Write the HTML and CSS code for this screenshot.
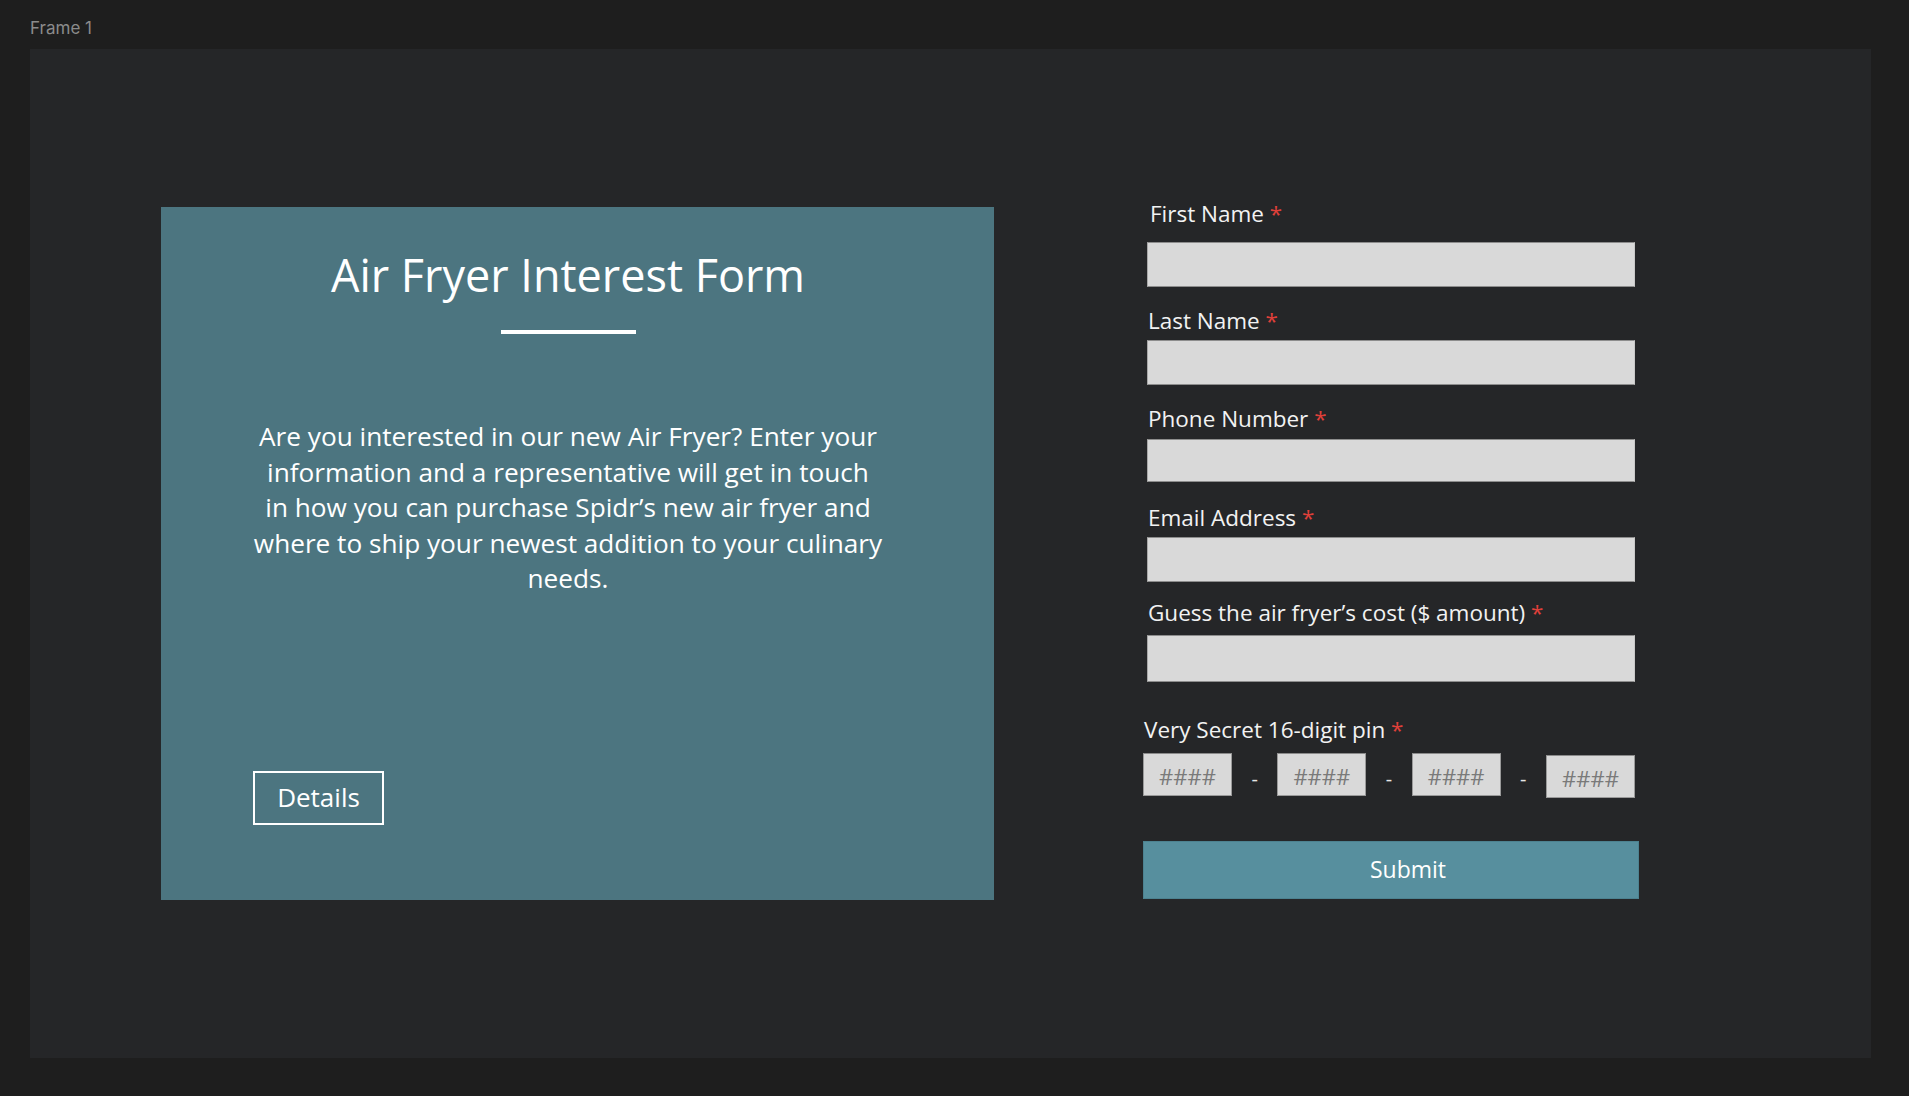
FILE: index.html
```html
<!DOCTYPE html>
<html lang="en">
<head>
<meta charset="utf-8">
<title>Air Fryer Interest Form</title>
<link rel="stylesheet" href="styles.css">
</head>
<body>
  <div class="frame-label">Frame 1</div>
  <div class="frame">
    <section class="card">
      <div class="card-inner">
        <h1 class="card-title">Air Fryer Interest Form</h1>
        <div class="card-rule"></div>
        <p class="card-text">Are you interested in our new Air Fryer? Enter your<br>information and a representative will get in touch<br>in how you can purchase Spidr’s new air fryer and<br>where to ship your newest addition to your culinary<br>needs.</p>
      </div>
      <button class="details-btn" type="button">Details</button>
    </section>

    <form class="form">
      <label class="field-label lbl-first">First Name <span class="req">*</span></label>
      <div class="field-input in-first"></div>

      <label class="field-label lbl-next">Last Name <span class="req">*</span></label>
      <div class="field-input"></div>

      <label class="field-label lbl-next">Phone Number <span class="req">*</span></label>
      <div class="field-input in-phone"></div>

      <label class="field-label lbl-email">Email Address <span class="req">*</span></label>
      <div class="field-input"></div>

      <label class="field-label lbl-guess">Guess the air fryer’s cost ($ amount) <span class="req">*</span></label>
      <div class="field-input in-guess"></div>

      <label class="field-label lbl-pin">Very Secret 16-digit pin <span class="req">*</span></label>
      <div class="pin-row">
        <div class="pin-box">####</div>
        <span class="pin-dash">-</span>
        <div class="pin-box">####</div>
        <span class="pin-dash">-</span>
        <div class="pin-box">####</div>
        <span class="pin-dash">-</span>
        <div class="pin-box pin-last">####</div>
      </div>

      <button class="submit-btn" type="button">Submit</button>
    </form>
  </div>
</body>
</html>
```

FILE: styles.css
```css
* { box-sizing: border-box; }

html, body {
  margin: 0;
  padding: 0;
  background: #1e1e1e;
  width: 1909px;
  height: 1096px;
  overflow: hidden;
}

body {
  font-family: "Open Sans", "Liberation Sans", sans-serif;
}

.frame-label {
  font-family: Inter, "Noto Sans", sans-serif;
  font-size: 17px;
  line-height: 20px;
  color: #8b8b8b;
  padding: 18px 0 0 30px;
  height: 49px;
}

.frame {
  margin-left: 30px;
  width: 1841px;
  height: 1009px;
  background: #252628;
  display: flex;
  align-items: flex-start;
}

/* ---------- card ---------- */
.card {
  margin-left: 131px;
  margin-top: 158px;
  width: 833px;
  height: 693px;
  background: #4c7580;
  display: flex;
  flex-direction: column;
  padding-bottom: 75px;
}

.card-inner {
  padding-right: 19px;
  display: flex;
  flex-direction: column;
  align-items: center;
}

.card-title {
  margin: 40px 0 0;
  font-size: 45px;
  line-height: 55px;
  font-weight: 400;
  color: #ffffff;
}

.card-rule {
  margin-top: 28px;
  width: 135px;
  height: 4px;
  background: #ffffff;
}

.card-text {
  margin: 85px 0 0;
  font-size: 26.2px;
  line-height: 35.5px;
  color: #ffffff;
  text-align: center;
  white-space: nowrap;
}

.details-btn {
  margin-top: auto;
  margin-left: 92px;
  width: 131px;
  height: 54px;
  border: 2px solid #ffffff;
  background: transparent;
  color: #ffffff;
  font-family: "Open Sans", "Liberation Sans", sans-serif;
  font-size: 26px;
  line-height: 1;
  padding: 0 0 2px;
}

/* ---------- form ---------- */
.form {
  margin-left: 149px;
  margin-top: 150px;
  width: 496px;
  display: flex;
  flex-direction: column;
}

.field-label {
  display: block;
  font-size: 22.5px;
  line-height: 30px;
  color: #f2f2f2;
  padding-left: 5px;
}

.req { color: #e0403a; }

.lbl-first { padding-left: 7px; }
.lbl-next { margin-top: 19px; }
.lbl-email { margin-top: 21px; }
.lbl-guess { margin-top: 16px; }
.lbl-pin { margin-top: 33px; padding-left: 1px; }

.field-input {
  margin-left: 4px;
  width: 488px;
  height: 45px;
  background: #d9d9d9;
  border: 1px solid #8d8d8d;
  border-left-color: #a8a8a8;
  border-right-color: #c8c8c8;
  margin-top: 4px;
}

.in-first { margin-top: 13px; }
.in-phone { margin-top: 5px; height: 43px; }
.in-guess { margin-top: 7px; height: 47px; }

.pin-row {
  margin-top: 8px;
  width: 492px;
  display: flex;
  justify-content: space-between;
  align-items: flex-start;
}

.pin-box {
  width: 89px;
  height: 43px;
  background: #d9d9d9;
  border: 1px solid #9a9a9a;
  border-top-color: #8a8a8a;
  color: #7a7a7a;
  font-size: 22px;
  line-height: 44px;
  text-align: center;
}

.pin-last { margin-top: 2px; }

.pin-dash {
  color: #e6e6e6;
  font-size: 20px;
  line-height: 20px;
  margin-top: 16px;
}

.submit-btn {
  margin-top: 43px;
  width: 496px;
  height: 58px;
  background: #578f9e;
  border: 1px solid #4d8290;
  color: #ffffff;
  font-family: "Open Sans", "Liberation Sans", sans-serif;
  font-size: 23px;
  padding: 0 0 2px 34px;
}
```
